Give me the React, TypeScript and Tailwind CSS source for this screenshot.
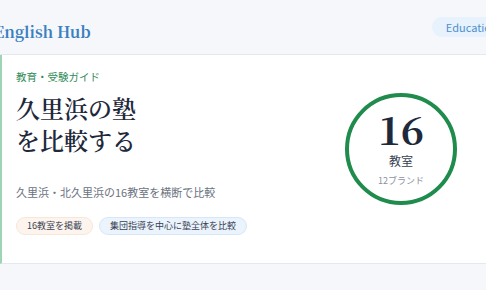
import React from "react";

const sans = '"Noto Sans CJK JP", "Noto Sans", sans-serif';
const serif = '"Noto Serif CJK JP", "Liberation Serif", "Noto Sans CJK JP", serif';

export default function App() {
  return (
    <div className="w-[486px] h-[290px] overflow-hidden bg-[#f5f7fb]" style={{ fontFamily: sans }}>
      <header className="h-[55px] w-[560px] -ml-[6px] flex items-start border-b border-[#e3e9f1]">
        <div className="mt-[21px] text-[15.5px] leading-[20px] font-bold text-[#3a7fc1]" style={{ fontFamily: serif }}>
          English Hub
        </div>
        <div className="ml-[341px] mt-[17px] rounded-full bg-[#e7f2fc] px-[14px] h-[20px] flex items-center text-[11px] text-[#4d8fcf] whitespace-nowrap">
          Education Plus
        </div>
      </header>
      <section className="bg-white border-l-[2px] border-[#9fd4b5] border-b border-b-[#e3e9f1] h-[209px] flex">
        <div className="flex-1 pl-[14px] pt-[14px]">
          <div className="text-[10.5px] text-[#2f8a57] leading-[16px]">教育・受験ガイド</div>
          <h1
            className="mt-[7px] text-[24px] font-semibold leading-[32px] text-[#1e293b]"
            style={{ fontFamily: serif }}
          >
            久里浜の塾
            <br />
            を比較する
          </h1>
          <p className="mt-[28px] text-[11px] text-[#6b7280] leading-[16px]">久里浜・北久里浜の16教室を横断で比較</p>
          <div className="mt-[17px] flex gap-[6px]">
            <span className="h-[18px] px-[10px] rounded-full bg-[#fdf4ee] border border-[#f7e6da] text-[9px] text-[#374151] flex items-center">
              16教室を掲載
            </span>
            <span className="h-[18px] px-[10px] rounded-full bg-[#ebf3fd] border border-[#d8e7f8] text-[9px] text-[#374151] flex items-center">
              集団指導を中心に塾全体を比較
            </span>
          </div>
        </div>
        <div className="w-[141px] pt-[38px]">
          <div className="w-[112px] h-[112px] rounded-full border-[4px] border-[#1f8b4c] flex flex-col items-center justify-center">
            <div className="-mt-[2px] text-[39px] font-bold leading-[38px] text-[#1e293b]" style={{ fontFamily: serif }}>
              16
            </div>
            <div className="mt-[6px] text-[12px] text-[#374151] leading-[16px]">教室</div>
            <div className="mt-[6px] text-[9px] text-[#8b93a1] leading-[12px]">12ブランド</div>
          </div>
        </div>
      </section>
    </div>
  );
}
